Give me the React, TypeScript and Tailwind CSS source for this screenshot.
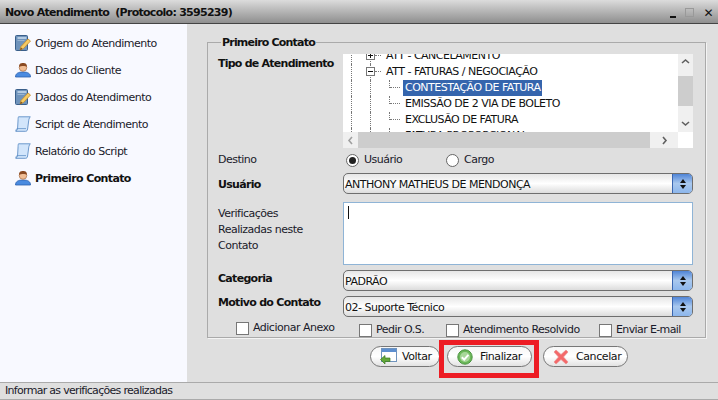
import React from "react";

const Book = () => (
  <svg width="16" height="17" viewBox="0 0 16 17" className="shrink-0">
    <rect x="0.5" y="0.5" width="12" height="15" rx="1" fill="#6f93bb" stroke="#3a5f8a" />
    <rect x="2.5" y="2" width="9" height="2" fill="#b4cbe2" />
    <rect x="2.5" y="5" width="7" height="1" fill="#9ab5d1" />
    <path d="M5 15 L6 11.5 L13 4 L15.5 6 L8.5 13.5 Z" fill="#f6cb64" stroke="#c48c28" strokeWidth="0.8" />
    <path d="M5 15 L6 12.5 L7.5 14 Z" fill="#7a4a1c" />
  </svg>
);

const Person = () => (
  <svg width="16" height="16" viewBox="0 0 16 16" className="shrink-0">
    <path d="M0.5 15 C0.5 11.5 3 10 8 10 C13 10 15.5 11.5 15.5 15 Z" fill="#4a8be0" stroke="#2b60ad" strokeWidth="0.8" />
    <circle cx="8" cy="5.5" r="3.8" fill="#f0bd94" stroke="#a86f45" strokeWidth="0.7" />
    <path d="M4.2 5 C3.8 1.5 6 1 8 1 C10 1 12.2 1.5 11.8 5 C10.5 3.6 6 3.6 4.2 5 Z" fill="#8a4a22" />
  </svg>
);

const Scroll = () => (
  <svg width="16" height="16" viewBox="0 0 16 16" className="shrink-0">
    <path d="M3.5 0.8 H15.3 C14 2 13.7 4 13.4 7 L12.6 13 C12.4 14.5 11.8 15.3 10.5 15.3 H0.8 C2 14.5 2.4 13.4 2.6 12 L3 5 C3.1 3 3 2 3.5 0.8 Z" fill="#d2e5fb" stroke="#5f8fc6" strokeWidth="0.9" />
    <path d="M0.8 15.3 C0.6 13.5 1.5 12.8 2.6 12.6 H11" fill="none" stroke="#5f8fc6" strokeWidth="0.8" />
  </svg>
);

const VoltarIcon = () => (
  <svg width="17" height="17" viewBox="0 0 17 17" className="shrink-0">
    <rect x="1.5" y="0.5" width="15" height="13" fill="#fff" stroke="#6f93bd" />
    <rect x="2" y="1" width="14" height="3" fill="#5d8fd0" />
    <path d="M0.5 11.5 L5 7.5 V10 H10 V13.5 H5 V16 Z" fill="#63a83a" stroke="#3b7a1f" strokeWidth="0.7" />
  </svg>
);

const CheckIcon = () => (
  <svg width="16" height="16" viewBox="0 0 16 16" className="shrink-0">
    <circle cx="8" cy="8" r="7.2" fill="#6cb85a" stroke="#4c9440" />
    <circle cx="8" cy="8" r="5" fill="#a8d79a" />
    <path d="M4.8 8.2 L7.2 10.6 L11.4 5.8" fill="none" stroke="#fff" strokeWidth="2" />
  </svg>
);

const XIcon = () => (
  <svg width="16" height="16" viewBox="0 0 16 16" className="shrink-0">
    <path d="M1 3 L3 1 L8 5.5 L13 1 L15 3 L10.5 8 L15 13 L13 15 L8 10.5 L3 15 L1 13 L5.5 8 Z" fill="#f4696a" stroke="#e89090" strokeWidth="0.7" />
  </svg>
);

const Select = ({ value }: { value: string }) => (
  <div className="flex h-[21px] w-[350px] items-center overflow-hidden rounded-[5px] border border-[#6e6e6e] bg-gradient-to-b from-[#e6e6e6] via-[#ffffff] to-[#dcdcdc]">
    <span className="flex-1 pl-[1px] pt-[3px] text-[#111]">{value}</span>
    <span className="flex h-full w-[20px] flex-col items-center justify-center gap-[2px] border-l border-[#3a66b0] bg-gradient-to-b from-[#4f84d6] via-[#a9c8ee] to-[#8cb6ec]">
      <span className="h-0 w-0 border-x-[3px] border-b-[4px] border-x-transparent border-b-[#111]" />
      <span className="h-0 w-0 border-x-[3px] border-t-[4px] border-x-transparent border-t-[#111]" />
    </span>
  </div>
);

const Check = ({ label, className }: { label: string; className?: string }) => (
  <div className={`flex items-center gap-[4px] ${className ?? ""}`}>
    <span className="h-[13px] w-[13px] border border-[#777] bg-white" />
    <span>{label}</span>
  </div>
);

const Radio = ({ label, on, className }: { label: string; on?: boolean; className?: string }) => (
  <div className={`flex items-center gap-[5px] ${className ?? ""}`}>
    <span className="flex h-[13px] w-[13px] items-center justify-center rounded-full border border-[#666] bg-white">
      {on && <span className="h-[7px] w-[7px] rounded-full bg-[#222]" />}
    </span>
    <span className="pt-[1px]">{label}</span>
  </div>
);

const Btn = ({ icon, label, className }: { icon: React.ReactNode; label: string; className?: string }) => (
  <div className={`flex h-[21px] items-center rounded-full border border-[#777] bg-gradient-to-b from-[#f6f6f6] via-[#ffffff] to-[#e2e2e2] tracking-[-0.4px] text-[#111] ${className ?? ""}`}>
    {icon}
    <span className="pt-[2px]">{label}</span>
  </div>
);

const Dots = ({ className }: { className: string }) => <span className={`absolute ${className}`} />;

const TreeRow = ({ label, sel }: { label: string; sel?: boolean }) => (
  <div className="relative flex h-[16px] items-center pl-[60px]">
    <Dots className="left-[8px] top-0 h-full border-l border-dotted border-[#777]" />
    <Dots className="left-[27px] top-0 h-full border-l border-dotted border-[#777]" />
    <Dots className="left-[46px] top-0 h-[8px] border-l border-dotted border-[#777]" />
    <Dots className="left-[47px] top-[7px] w-[10px] border-t border-dotted border-[#777]" />
    <span className={`whitespace-nowrap px-[2px] ${sel ? "bg-[#3565ad] text-white" : "text-[#111]"}`}>{label}</span>
  </div>
);

const ParentRow = ({ label, plus }: { label: string; plus?: boolean }) => (
  <div className="relative flex h-[16px] items-center pl-[43px]">
    <Dots className="left-[8px] top-0 h-full border-l border-dotted border-[#777]" />
    <Dots className="left-[27px] top-0 h-full border-l border-dotted border-[#777]" />
    <span className="absolute left-[23px] top-[3px] flex h-[9px] w-[9px] items-center justify-center border border-[#777] bg-white">
      <span className="h-[1px] w-[5px] bg-[#111]" />
      {plus && <span className="absolute h-[5px] w-[1px] bg-[#111]" />}
    </span>
    <Dots className="left-[32px] top-[7px] w-[6px] border-t border-dotted border-[#777]" />
    <span className="whitespace-nowrap text-[#111]">{label}</span>
  </div>
);

const nav = [
  { i: <Book />, t: "Origem do Atendimento" },
  { i: <Person />, t: "Dados do Cliente" },
  { i: <Book />, t: "Dados do Atendimento" },
  { i: <Scroll />, t: "Script de Atendimento" },
  { i: <Scroll />, t: "Relatório do Script" },
  { i: <Person />, t: "Primeiro Contato", b: true },
];

export default function App() {
  return (
    <div className="flex h-[400px] w-[718px] flex-col overflow-hidden bg-[#dfdfdf] font-['DejaVu_Sans',sans-serif] text-[11px] tracking-[-0.5px] text-[#1a1a2a]">
      <div className="flex h-[24px] items-center justify-between border-b border-[#444] bg-gradient-to-b from-[#dcdcdc] to-[#8f8f8f] pl-[5px] pr-[5px]">
        <span className="whitespace-pre pt-[3px] font-bold tracking-[-0.72px] text-[#111]">Novo Atendimento  (Protocolo: 3595239)</span>
        <div className="flex items-center gap-[9px] pt-[2px]">
          <span className="mt-[8px] h-[2px] w-[6px] bg-[#111]" />
          <span className="h-[9px] w-[9px] border border-[#999]" />
          <span className="text-[12px] leading-none text-[#111]">✕</span>
        </div>
      </div>

      <div className="flex min-h-0 flex-1">
        <div className="flex w-[187px] shrink-0 flex-col gap-[9px] bg-[#f8f9ff] pl-[15px] pt-[10px]">
          {nav.map((n) => (
            <div key={n.t} className={`flex h-[18px] items-center gap-[4px] ${n.b ? "font-bold tracking-[-0.62px] text-[#111]" : ""}`}>
              {n.i}
              <span className="whitespace-nowrap pt-[2px]">{n.t}</span>
            </div>
          ))}
        </div>

        <div className="flex flex-1 flex-col">
          <div className="relative ml-[20px] mt-[18px] h-[296px] w-[499px] border border-[#aaa] pl-[10px] pt-[11px] shadow-[1px_1px_0_#f4f4f4]">
            <span className="absolute left-[13px] top-[-8px] bg-[#dfdfdf] px-[1px] font-bold tracking-[-0.8px] text-[#111]">Primeiro Contato</span>

            <div className="flex">
              <span className="w-[125px] pt-[2px] font-bold tracking-[-0.76px] text-[#111]">Tipo de Atendimento</span>
              <div className="flex h-[94px] w-[350px] flex-col bg-white">
                <div className="flex min-h-0 flex-1">
                  <div className="min-w-0 flex-1 overflow-hidden">
                    <div className="mt-[-6px]">
                      <ParentRow label="ATT - CANCELAMENTO" plus />
                      <ParentRow label="ATT - FATURAS / NEGOCIAÇÃO" />
                      <TreeRow label="CONTESTAÇÃO DE FATURA" sel />
                      <TreeRow label="EMISSÃO DE 2 VIA DE BOLETO" />
                      <TreeRow label="EXCLUSÃO DE FATURA" />
                      <TreeRow label="FATURA PROPORCIONAL" />
                    </div>
                  </div>
                  <div className="flex w-[15px] flex-col items-center bg-[#f0f0f0] text-[#555]">
                    <svg width="15" height="22" viewBox="0 0 15 22"><path d="M4 9 L7.5 6 L11 9" fill="none" stroke="#606060" strokeWidth="1.6" /></svg>
                    <div className="h-[30px] w-full bg-[#cdcdcd]" />
                    <div className="flex-1" />
                    <svg width="15" height="16" viewBox="0 0 15 16"><path d="M4 6 L7.5 9 L11 6" fill="none" stroke="#606060" strokeWidth="1.6" /></svg>
                  </div>
                </div>
                <div className="flex h-[16px] shrink-0 pr-[15px]">
                  <div className="flex w-[15px] items-center justify-center bg-[#f0f0f0]">
                    <svg width="15" height="15" viewBox="0 0 15 15"><path d="M9 4 L6 7.5 L9 11" fill="none" stroke="#a0a0a0" strokeWidth="1.6" /></svg>
                  </div>
                  <div className="flex-1 bg-[#cdcdcd]" />
                  <div className="flex w-[28px] items-center justify-center bg-[#f0f0f0]">
                    <svg width="15" height="15" viewBox="0 0 15 15"><path d="M6 4 L9 7.5 L6 11" fill="none" stroke="#606060" strokeWidth="1.6" /></svg>
                  </div>
                </div>
              </div>
            </div>

            <div className="mt-[4px] flex h-[16px] items-center">
              <span className="w-[128px] pt-[1px]">Destino</span>
              <Radio label="Usuário" on className="w-[100px]" />
              <Radio label="Cargo" />
            </div>

            <div className="mt-[5px] flex items-center">
              <span className="w-[125px] pt-[3px] font-bold tracking-[-0.7px] text-[#111]">Usuário</span>
              <Select value="ANTHONY MATHEUS DE MENDONÇA" />
            </div>

            <div className="mt-[8px] flex">
              <span className="w-[125px] pt-[4px] leading-[16px]">Verificações<br />Realizadas neste<br />Contato</span>
              <div className="h-[63px] w-[350px] border border-[#8fb4d6] bg-white pl-[4px] pt-[3px]">
                <span className="block h-[13px] w-[1px] bg-[#111]" />
              </div>
            </div>

            <div className="mt-[5px] flex items-center">
              <span className="w-[125px] pb-[2px] font-bold tracking-[-0.7px] text-[#111]">Categoria</span>
              <Select value="PADRÃO" />
            </div>

            <div className="mt-[4px] flex items-center">
              <span className="w-[125px] pb-[7px] font-bold tracking-[-0.7px] text-[#111]">Motivo do Contato</span>
              <Select value="02- Suporte Técnico" />
            </div>

            <div className="relative mt-[3px] flex h-[16px]">
              <Check label="Adicionar Anexo" className="ml-[18px] w-[123px] -translate-y-[1px]" />
              <Check label="Pedir O.S." className="w-[87px] translate-y-[1px]" />
              <Check label="Atendimento Resolvido" className="w-[153px] translate-y-[1px]" />
              <Check label="Enviar E-mail" className="translate-y-[1px] tracking-[-0.62px]" />
            </div>
          </div>

          <div className="mt-[8px] flex h-[21px] items-start">
            <Btn icon={<span className="ml-[9px] mr-[5px]"><VoltarIcon /></span>} label="Voltar" className="ml-[183px] w-[70px]" />
            <div className="relative ml-[7px]">
              <Btn icon={<span className="ml-[9px] mr-[7px]"><CheckIcon /></span>} label="Finalizar" className="w-[85px]" />
              <span className="absolute left-[-8px] top-[-6px] h-[38px] w-[100px] border-[5px] border-[#ed1c24]" />
            </div>
            <Btn icon={<span className="ml-[9px] mr-[7px]"><XIcon /></span>} label="Cancelar" className="ml-[11px] w-[85px]" />
          </div>
        </div>
      </div>

      <div className="flex h-[18px] items-center border-y border-[#aaa] pl-[5px] tracking-[-0.7px]">Informar as verificações realizadas</div>
    </div>
  );
}
